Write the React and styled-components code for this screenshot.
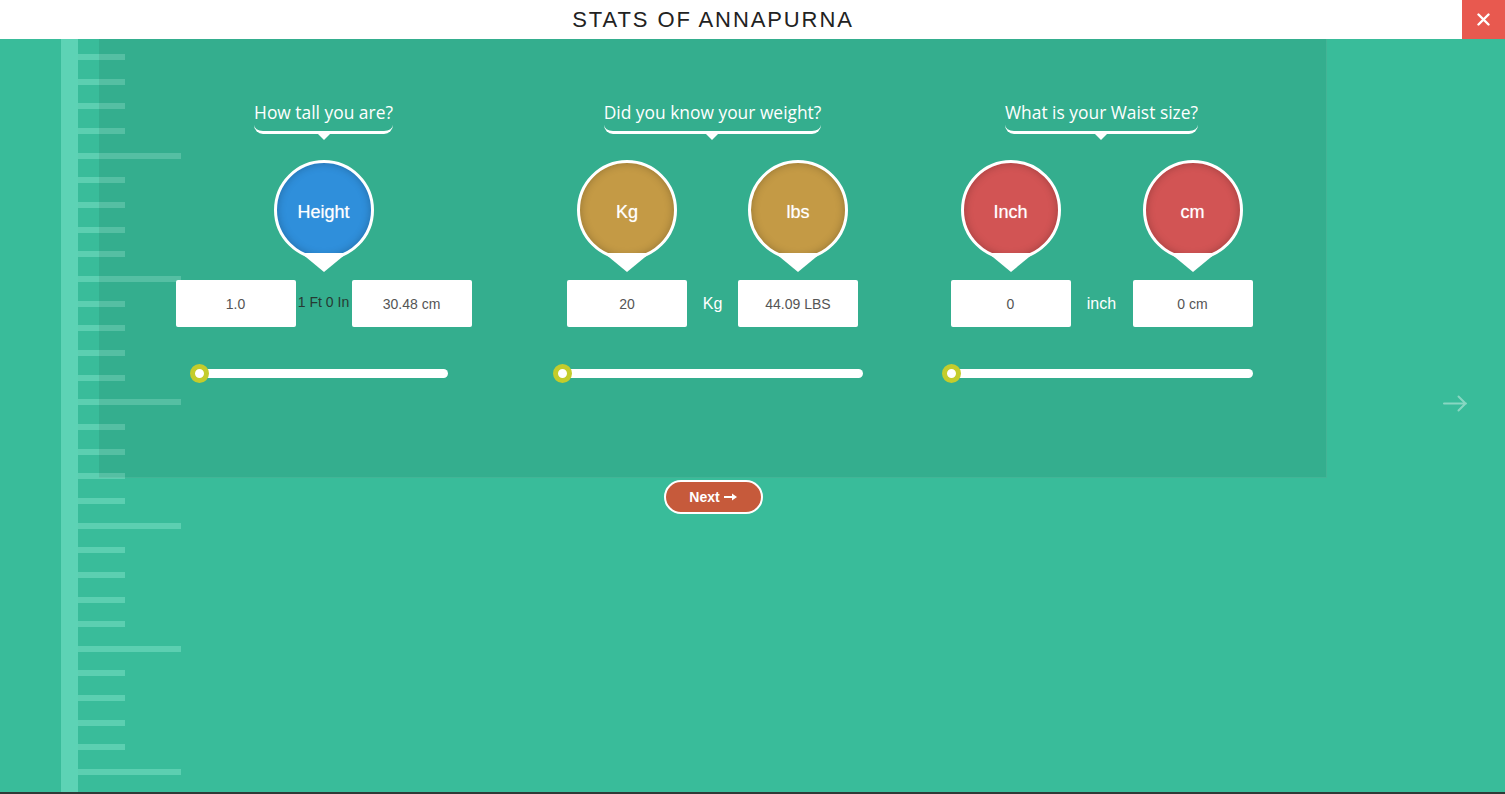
import styled, { createGlobalStyle } from "styled-components";

const GlobalStyle = createGlobalStyle`
  html, body {
    margin: 0;
    padding: 0;
    background: #2f3a37;
  }
  body {
    font-family: "Liberation Sans", Arial, sans-serif;
  }
  * {
    box-sizing: border-box;
  }
`

const TICK = "#5ccfb1";

const Page = styled.div`
  height: calc(100vh - 2px);
  display: flex;
  flex-direction: column;
  background: #39bc9a;
`

const Header = styled.header`
  height: 39px;
  flex-shrink: 0;
  display: flex;
  background: #fff;
`

const HeaderTitle = styled.h1`
  margin: 0 0 0 99px;
  width: 1228px;
  text-align: center;
  font: 400 22px/39px "Liberation Sans", Arial, sans-serif;
  letter-spacing: 1.9px;
  color: #222;
`

const CloseButton = styled.button`
  margin-left: auto;
  width: 43px;
  height: 39px;
  padding: 0;
  border: 0;
  background: #e8594f;
  display: flex;
  align-items: center;
  justify-content: center;
`

const Main = styled.main`
  flex: 1;
  display: flex;
  background-color: #39bc9a;
  background-image:
    linear-gradient(#5dd3b5, #5dd3b5),
    repeating-linear-gradient(to bottom, transparent 0 15px, ${TICK} 15px 21px, transparent 21px 24.66px),
    repeating-linear-gradient(to bottom, transparent 0 113.6px, ${TICK} 113.6px 119.6px, transparent 119.6px 123.3px);
  background-repeat: no-repeat;
  background-position: 61px 0, 78px 0, 78px 0;
  background-size: 17px 100%, 47px 100%, 103px 100%;
`

const Stage = styled.div`
  margin-left: 99px;
  width: 1228px;
  display: flex;
  flex-direction: column;
  align-items: center;
`

const Panel = styled.section`
  width: 100%;
  height: 439px;
  padding: 61px 0 0 30px;
  display: grid;
  grid-template-columns: repeat(3, 389px);
  align-content: start;
  background: rgba(0, 0, 0, 0.075);
  border-right: 1px solid rgba(255, 255, 255, 0.08);
  border-bottom: 1px solid rgba(255, 255, 255, 0.08);
`

const Column = styled.div`
  display: flex;
  flex-direction: column;
  align-items: center;
`

const Question = styled.h2`
  position: relative;
  margin: 0;
  padding-bottom: 7px;
  font: 400 17.4px/24px "Open Sans", sans-serif;
  color: #fff;
  border-bottom: 3px solid #fff;
  border-radius: 0 0 9px 9px;

  &::after {
    content: "";
    position: absolute;
    left: 50%;
    bottom: -9px;
    transform: translateX(-50%);
    border-left: 6px solid transparent;
    border-right: 6px solid transparent;
    border-top: 6px solid #fff;
  }
`

const UnitGrid = styled.div`
  display: grid;
  grid-template-columns: 120px ${(p) => p.$gap}px 120px;
  justify-items: center;
  align-items: center;
  margin-top: ${(p) => p.$top || 0}px;
`

const Bubble = styled.div`
  position: relative;
  grid-column: ${(p) => (p.$wide ? "1 / -1" : "auto")};
  width: 100px;
  height: 100px;
  padding-top: 5px;
  border-radius: 50%;
  border: 3px solid #fff;
  background: ${(p) => p.$color};
  box-shadow: inset 0 0 8px rgba(0, 0, 0, 0.25);
  display: flex;
  align-items: center;
  justify-content: center;
  color: #fff;
  font: 400 18px "Liberation Sans", Arial, sans-serif;
  text-shadow: 0 0 1px rgba(255, 255, 255, 0.6);

  &::after {
    content: "";
    position: absolute;
    left: 50%;
    bottom: -15px;
    transform: translateX(-50%);
    border-left: 23px solid transparent;
    border-right: 23px solid transparent;
    border-top: 19px solid #fff;
  }
`

const ValueBox = styled.div`
  width: 120px;
  height: 47px;
  background: #fff;
  border-radius: 2px;
  display: flex;
  align-items: center;
  justify-content: center;
  font-size: 14px;
  color: #555;
`

const UnitLabel = styled.span`
  font-size: ${(p) => (p.$dark ? 14 : 16)}px;
  color: ${(p) => (p.$dark ? "#263a33" : "#fff")};
  margin-top: ${(p) => (p.$dark ? -3 : 0)}px;
  white-space: nowrap;
`

const Track = styled.div`
  position: relative;
  align-self: flex-start;
  margin: 42px 0 0 ${(p) => p.$offset}px;
  width: ${(p) => p.$width}px;
  height: 9px;
  border-radius: 5px;
  background: #fff;
`

const Handle = styled.span`
  position: absolute;
  left: -9px;
  top: -5px;
  width: 19px;
  height: 19px;
  border-radius: 50%;
  border: 5px solid #c4cc2b;
  background: #fff;
`

const NextButton = styled.button`
  margin-top: 2px;
  width: 99px;
  height: 34px;
  border: 2px solid #fff;
  border-radius: 17px;
  background: #c65a3b;
  color: #fff;
  font: 700 14px "Liberation Sans", Arial, sans-serif;
  display: flex;
  align-items: center;
  justify-content: center;
  gap: 4px;
  padding: 0;
`

const Aside = styled.aside`
  flex: 1;
  display: flex;
  justify-content: flex-end;
  align-items: flex-start;
  padding: 356px 37px 0 0;
`

const columns = [
  {
    question: "How tall you are?",
    color: "#2f8fdb",
    bubbles: ["Height"],
    gap: 56,
    values: ["1.0", "30.48 cm"],
    label: "1 Ft 0 In",
    dark: true,
    track: { offset: 70, width: 249 },
  },
  {
    question: "Did you know your weight?",
    color: "#c49a45",
    bubbles: ["Kg", "lbs"],
    gap: 51,
    values: ["20", "44.09 LBS"],
    label: "Kg",
    track: { offset: 44, width: 301 },
  },
  {
    question: "What is your Waist size?",
    color: "#d25454",
    bubbles: ["Inch", "cm"],
    gap: 62,
    values: ["0", "0 cm"],
    label: "inch",
    track: { offset: 44, width: 302 },
  },
];

const App = () => {
  return (
    <Page>
      <GlobalStyle />
      <Header>
        <HeaderTitle>STATS OF ANNAPURNA</HeaderTitle>
        <CloseButton aria-label="close">
          <svg width="13" height="13" viewBox="0 0 13 13">
            <path d="M1.5 1.5l10 10M11.5 1.5l-10 10" stroke="#fff" strokeWidth="2.4" strokeLinecap="round" />
          </svg>
        </CloseButton>
      </Header>
      <Main>
        <Stage>
          <Panel>
            {columns.map((col) => (
              <Column key={col.question}>
                <Question>{col.question}</Question>
                <UnitGrid $gap={col.gap} $top={26}>
                  {col.bubbles.length === 1 ? (
                    <Bubble $wide $color={col.color}>{col.bubbles[0]}</Bubble>
                  ) : (
                    <>
                      <Bubble $color={col.color}>{col.bubbles[0]}</Bubble>
                      <span />
                      <Bubble $color={col.color}>{col.bubbles[1]}</Bubble>
                    </>
                  )}
                </UnitGrid>
                <UnitGrid $gap={col.gap} $top={20}>
                  <ValueBox>{col.values[0]}</ValueBox>
                  <UnitLabel $dark={col.dark}>{col.label}</UnitLabel>
                  <ValueBox>{col.values[1]}</ValueBox>
                </UnitGrid>
                <Track $offset={col.track.offset} $width={col.track.width}>
                  <Handle />
                </Track>
              </Column>
            ))}
          </Panel>
          <NextButton>
            Next
            <svg width="13" height="8" viewBox="0 0 13 8">
              <path d="M0 4h9" stroke="#fff" strokeWidth="2" />
              <path d="M8 0.5L13 4 8 7.5z" fill="#fff" />
            </svg>
          </NextButton>
        </Stage>
        <Aside>
          <svg width="25" height="17" viewBox="0 0 25 17">
            <path d="M1 8.5h22M15.5 1.5l7 7-7 7" fill="none" stroke="rgba(255,255,255,0.4)" strokeWidth="2" strokeLinecap="round" strokeLinejoin="round" />
          </svg>
        </Aside>
      </Main>
    </Page>
  );
}

export default App;
